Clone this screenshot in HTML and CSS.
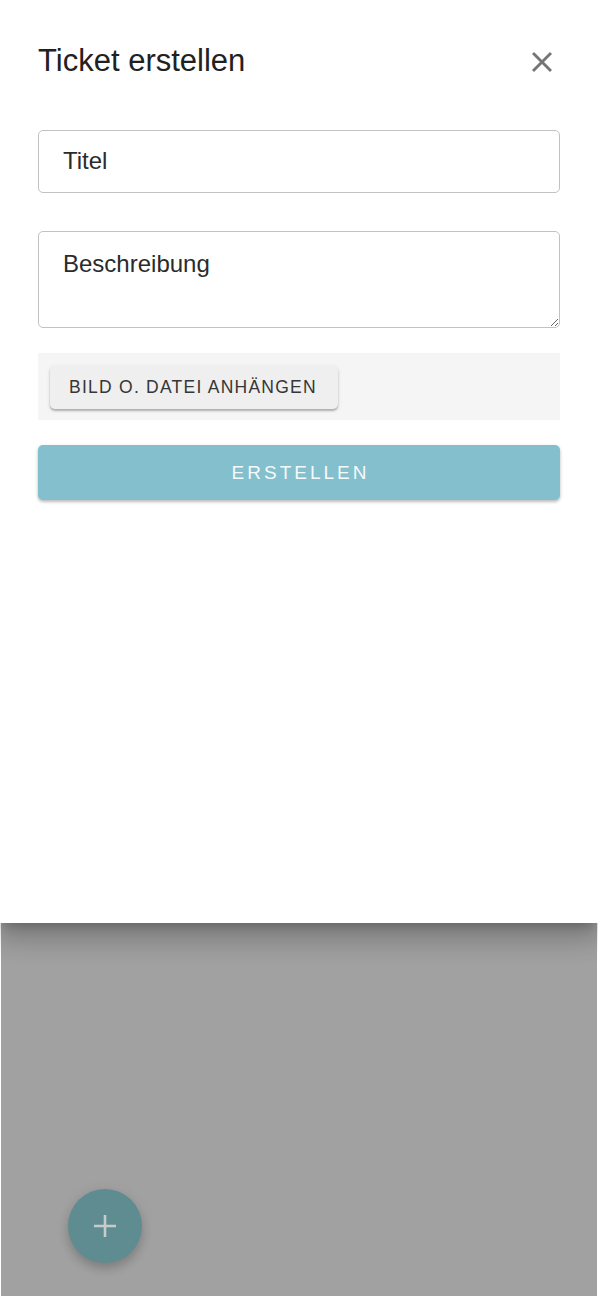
FILE: index.html
```html
<!DOCTYPE html>
<html lang="de">
<head>
<meta charset="utf-8">
<title>Ticket erstellen</title>
<link rel="stylesheet" href="styles.css">
</head>
<body>
<div class="screen">
  <div class="drawer">
    <div class="header">
      <h1 class="title">Ticket erstellen</h1>
      <button class="close" aria-label="Schließen">
        <svg viewBox="5 5 14 14" width="20" height="20"><path d="M19 6.41L17.59 5 12 10.59 6.41 5 5 6.41 10.59 12 5 17.59 6.41 19 12 13.41 17.59 19 19 17.59 13.41 12z" fill="#757575"/></svg>
      </button>
    </div>
    <input class="field field-title" type="text" placeholder="Titel">
    <textarea class="field field-desc" placeholder="Beschreibung"></textarea>
    <div class="attach">
      <button class="attach-btn">BILD O. DATEI ANHÄNGEN</button>
    </div>
    <button class="submit">ERSTELLEN</button>
  </div>
  <div class="backdrop">
    <button class="fab" aria-label="Neu">
      <svg viewBox="0 0 22 22" width="22" height="22"><path d="M11 0v22M0 11h22" stroke="#c6cccc" stroke-width="2.6" fill="none"/></svg>
    </button>
  </div>
</div>
</body>
</html>
```

FILE: styles.css
```css
* { box-sizing: border-box; }

html, body {
  margin: 0;
  padding: 0;
  background: #ffffff;
}

body {
  font-family: "Liberation Sans", Arial, sans-serif;
  color: #212121;
}

.screen {
  width: 598px;
  height: 1300px;
  display: flex;
  flex-direction: column;
  background: #ffffff;
}

.drawer {
  position: relative;
  z-index: 2;
  height: 923px;
  flex: none;
  background: #ffffff;
  padding: 43px 38px 0 38px;
  display: flex;
  flex-direction: column;
  box-shadow: 0 8px 10px -5px rgba(0,0,0,0.2), 0 16px 24px 2px rgba(0,0,0,0.14), 0 6px 30px 5px rgba(0,0,0,0.12);
}

.header {
  display: flex;
  justify-content: space-between;
  align-items: flex-start;
}

.title {
  margin: 0;
  font-size: 31px;
  line-height: 36px;
  font-weight: 400;
  color: #212121;
}

.close {
  border: 0;
  background: transparent;
  padding: 0;
  margin: 8px 8px 0 0;
  width: 20px;
  height: 21px;
  display: flex;
  align-items: center;
  justify-content: center;
}

.close svg { display: block; }

.field {
  display: block;
  width: 100%;
  border: 1px solid #c2c2c2;
  border-radius: 5px;
  font-family: "Liberation Sans", Arial, sans-serif;
  font-size: 24px;
  line-height: 28px;
  color: #212121;
  padding: 0 24px;
  outline: none;
  background: #ffffff;
  margin: 0;
}

.field::placeholder {
  color: #2b2b2b;
  opacity: 1;
}

.field-title {
  margin-top: 51px;
  height: 63px;
  padding-top: 16px;
  padding-bottom: 17px;
}

.field-desc {
  margin-top: 38px;
  height: 97px;
  padding-top: 18px;
  resize: vertical;
}

.attach {
  margin-top: 25px;
  height: 67px;
  background: #f5f5f5;
  padding: 13px 12px 0 12px;
  display: flex;
  align-items: flex-start;
}

.attach-btn {
  height: 43px;
  border: 0;
  border-radius: 5px;
  background: #efefef;
  box-shadow: 0 2px 2px rgba(0,0,0,0.25), 0 1px 5px rgba(0,0,0,0.08);
  font-family: "Liberation Sans", Arial, sans-serif;
  font-size: 17.5px;
  letter-spacing: 1.25px;
  color: #363636;
  padding: 0 21px 0 19px;
  line-height: 43px;
}

.submit {
  margin-top: 25px;
  height: 55px;
  width: 100%;
  border: 0;
  border-radius: 5px;
  background: #83bfcc;
  color: #f4fafb;
  font-family: "Liberation Sans", Arial, sans-serif;
  font-size: 19px;
  letter-spacing: 3px;
  padding: 0 0 0 3px;
  box-shadow: 0 2px 3px rgba(0,0,0,0.22), 0 1px 5px rgba(0,0,0,0.08);
}

.backdrop {
  position: relative;
  z-index: 1;
  flex: none;
  height: 373px;
  margin: 0 1px;
  background: #a1a1a1;
}

.fab {
  position: absolute;
  left: 67px;
  top: 266px;
  width: 74px;
  height: 74px;
  border-radius: 50%;
  border: 0;
  padding: 0;
  background: #5f8c90;
  display: flex;
  align-items: center;
  justify-content: center;
  box-shadow: 0 6px 10px rgba(0,0,0,0.16), 0 2px 14px rgba(0,0,0,0.08);
}

.fab svg { display: block; }
```
